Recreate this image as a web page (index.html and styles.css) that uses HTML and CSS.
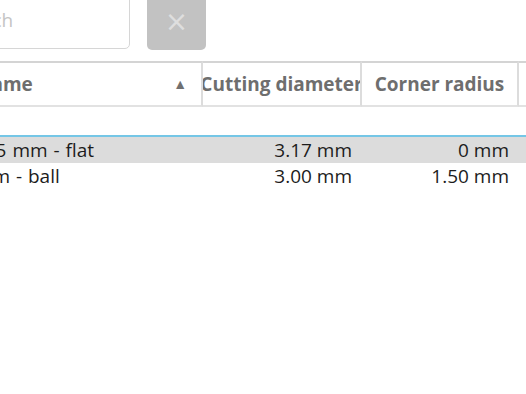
FILE: index.html
```html
<!DOCTYPE html>
<html>
<head>
    <meta charset="utf-8">
    <meta name="viewport" content="width=device-width, initial-scale=1">
    <title>Tool library</title>
    <link rel="stylesheet" href="styles.css">
</head>
<body>

<div class="toolbar">
    <div class="search">Search</div>
    <button type="button" class="clear">&times;</button>
</div>

<div class="tools">
    <div class="head name">Name <span class="sort">&#9650;</span></div>
    <div class="head">Cutting diameter</div>
    <div class="head">Corner radius</div>
    <div class="head"></div>

    <div class="gap"></div>

    <div class="row selected">
        <div class="cell name">3.175 mm - flat</div>
        <div class="cell num">3.17 mm</div>
        <div class="cell num">0 mm</div>
        <div class="cell"></div>
    </div>
    <div class="row">
        <div class="cell name">3 mm - ball</div>
        <div class="cell num">3.00 mm</div>
        <div class="cell num">1.50 mm</div>
        <div class="cell"></div>
    </div>
</div>

</body>
</html>
```

FILE: styles.css
```css
html, body {
    overflow: hidden;
}

body {
    margin: 0;
    background: #fff;
    font: 500 19px/1.2 "Open Sans", "Liberation Sans", sans-serif;
    color: #1c1c1c;
}

.toolbar {
    display: flex;
    gap: 17px;
    height: 62px;
    margin: -12px 0 11px -60px;
}

.search {
    width: 190px;
    height: 61px;
    padding: 20px 0 0 12px;
    box-sizing: border-box;
    border: 1px solid #d6d6d6;
    border-radius: 5px;
    color: #c4c4c4;
    font-weight: 400;
}

.clear {
    width: 59px;
    height: 62px;
    padding: 6px 0 0;
    border: none;
    border-radius: 5px;
    background: #c2c2c2;
    color: #dedede;
    font: 28px/1 "DejaVu Sans", sans-serif;
}

.tools {
    display: grid;
    grid-template-columns: 263px 159px 157px 100px;
    margin-left: -60px;
}

.head {
    height: 42px;
    line-height: 42px;
    border-top: 2px solid #d4d4d4;
    border-bottom: 2px solid #e2e2e2;
    border-right: 2px solid #dcdcdc;
    overflow: hidden;
    white-space: nowrap;
    font-weight: 700;
    color: #6e6e6e;
    display: flex;
    justify-content: center;
}

.head.name {
    justify-content: space-between;
    padding: 0 14px 0 36px;
}

.sort {
    font-size: 14px;
    color: #707070;
}

.gap {
    grid-column: 1 / 5;
    height: 28px;
    border-bottom: 2px solid #74c6e6;
}

.row {
    display: contents;
}

.cell {
    height: 26px;
    line-height: 26px;
    white-space: nowrap;
    overflow: hidden;
}

.selected .cell {
    background: #dcdcdc;
}

.cell.name {
    padding-left: 18px;
    word-spacing: 1px;
}

.cell.num {
    text-align: right;
    padding-right: 10px;
}
```
